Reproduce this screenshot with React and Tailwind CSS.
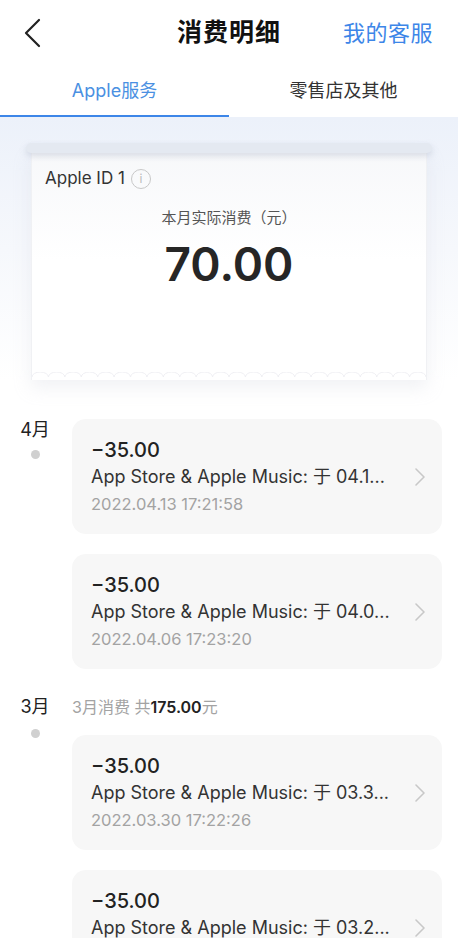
import React from "react";

const FONT = { fontFamily: '"Inter", "Noto Sans CJK SC", sans-serif' };

function Chevron() {
  return (
    <svg width="12" height="20" viewBox="0 0 12 20" fill="none">
      <path d="M2 2l8 8-8 8" stroke="#c8c8c8" strokeWidth="1.6" strokeLinecap="round" strokeLinejoin="round" />
    </svg>
  );
}

function Card({ amount, title, date }) {
  return (
    <div className="flex items-center rounded-[14px] bg-[#f7f7f7] pl-[19px] pr-[16px] pt-[18px] pb-[17px]">
      <div className="flex-1 min-w-0">
        <div className="text-[20px] leading-[26px] text-[#222] font-medium">{amount}</div>
        <div className="text-[18px] leading-[28px] text-[#333] whitespace-nowrap">{title}</div>
        <div className="text-[16.5px] leading-[26px] text-[#a3a3a3]">{date}</div>
      </div>
      <Chevron />
    </div>
  );
}

function Scallops() {
  const n = 24;
  const w = 17;
  let d = "M0 0 ";
  for (let i = 0; i < n; i++) {
    d += `a${w / 2} 5 0 0 1 ${w} 0 `;
  }
  return (
    <svg className="block w-full h-[8px]" viewBox={`0 -5 ${n * w} 8`} preserveAspectRatio="none">
      <path d={d} fill="none" stroke="#efeff3" strokeWidth="1" />
    </svg>
  );
}

export default function App() {
  return (
    <div className="w-[458px] h-[938px] overflow-hidden bg-white" style={FONT}>
      {/* Header */}
      <div className="relative h-[66px] flex items-center justify-center">
        <div className="absolute left-[22px] top-[18px]">
          <svg width="20" height="30" viewBox="0 0 20 30" fill="none">
            <path d="M17 2L4 15l13 13" stroke="#222" strokeWidth="2.2" strokeLinecap="round" strokeLinejoin="round" />
          </svg>
        </div>
        <div className="text-[25px] font-bold text-[#111] tracking-[1px]">消费明细</div>
        <div className="absolute right-[25px] top-[17px] text-[22px] text-[#3d86e8] tracking-[0.5px]">我的客服</div>
      </div>
      {/* Tabs */}
      <div className="flex h-[51px]">
        <div className="flex-1 flex flex-col">
          <div className="flex-1 flex items-center justify-center text-[18px] text-[#4a90e2]">Apple服务</div>
          <div className="h-[2px] bg-[#3d86e8]" />
        </div>
        <div className="flex-1 flex flex-col">
          <div className="flex-1 flex items-center justify-center text-[18px] text-[#333]">零售店及其他</div>
          <div className="h-[2px]" />
        </div>
      </div>
      {/* Summary */}
      <div className="bg-gradient-to-b from-[#ecf1fa] via-[#f6f8fc] to-white pt-[26px] px-[26px]">
        <div className="h-[10px] rounded-full bg-[#e4e9f1] shadow-[0_3px_6px_rgba(160,170,190,0.35)] relative z-10" />
        <div className="mx-[5px] -mt-[3px] bg-white shadow-[0_8px_16px_rgba(200,205,215,0.25)] border-x border-[#f0f1f4]">
          <div className="h-[222px] bg-gradient-to-b from-[#f7f8fa] via-white to-white px-[13px] pt-[16px]">
            <div className="flex items-center gap-[6px]">
              <span className="text-[17px] text-[#333]">Apple ID 1</span>
              <span className="w-[20px] h-[20px] rounded-full border border-[#c8c8c8] flex items-center justify-center text-[12px] text-[#bbb] leading-none">i</span>
            </div>
            <div className="text-center text-[15px] text-[#555] mt-[15px]">本月实际消费（元）</div>
            <div className="text-center text-[46px] leading-[60px] font-semibold text-[#262626] mt-[5px]">70.00</div>
          </div>
          <Scallops />
        </div>
      </div>
      {/* Timeline */}
      <div className="mt-[39px] pr-[16px]">
        <div className="flex">
          <div className="w-[72px] flex flex-col items-center pr-[2px]">
            <div className="text-[18px] leading-[24px] text-[#222] mt-[-1px]">4月</div>
            <div className="w-[9px] h-[9px] rounded-full bg-[#d0d0d0] mt-[8px]" />
          </div>
          <div className="flex-1 flex flex-col gap-[20px]">
            <Card amount="−35.00" title="App Store & Apple Music: 于 04.1..." date="2022.04.13 17:21:58" />
            <Card amount="−35.00" title="App Store & Apple Music: 于 04.0..." date="2022.04.06 17:23:20" />
          </div>
        </div>
        <div className="flex mt-[26px]">
          <div className="w-[72px] flex flex-col items-center pr-[2px]">
            <div className="text-[18px] leading-[24px] text-[#222]">3月</div>
            <div className="w-[9px] h-[9px] rounded-full bg-[#d0d0d0] mt-[10px]" />
          </div>
          <div className="flex-1 flex flex-col">
            <div className="text-[16px] leading-[24px] text-[#a3a3a3]">
              3月消费 共<span className="font-semibold text-[#222]">175.00</span>元
            </div>
            <div className="flex flex-col gap-[20px] mt-[16px]">
              <Card amount="−35.00" title="App Store & Apple Music: 于 03.3..." date="2022.03.30 17:22:26" />
              <Card amount="−35.00" title="App Store & Apple Music: 于 03.2..." date="2022.03.23 17:21:40" />
            </div>
          </div>
        </div>
      </div>
    </div>
  );
}
